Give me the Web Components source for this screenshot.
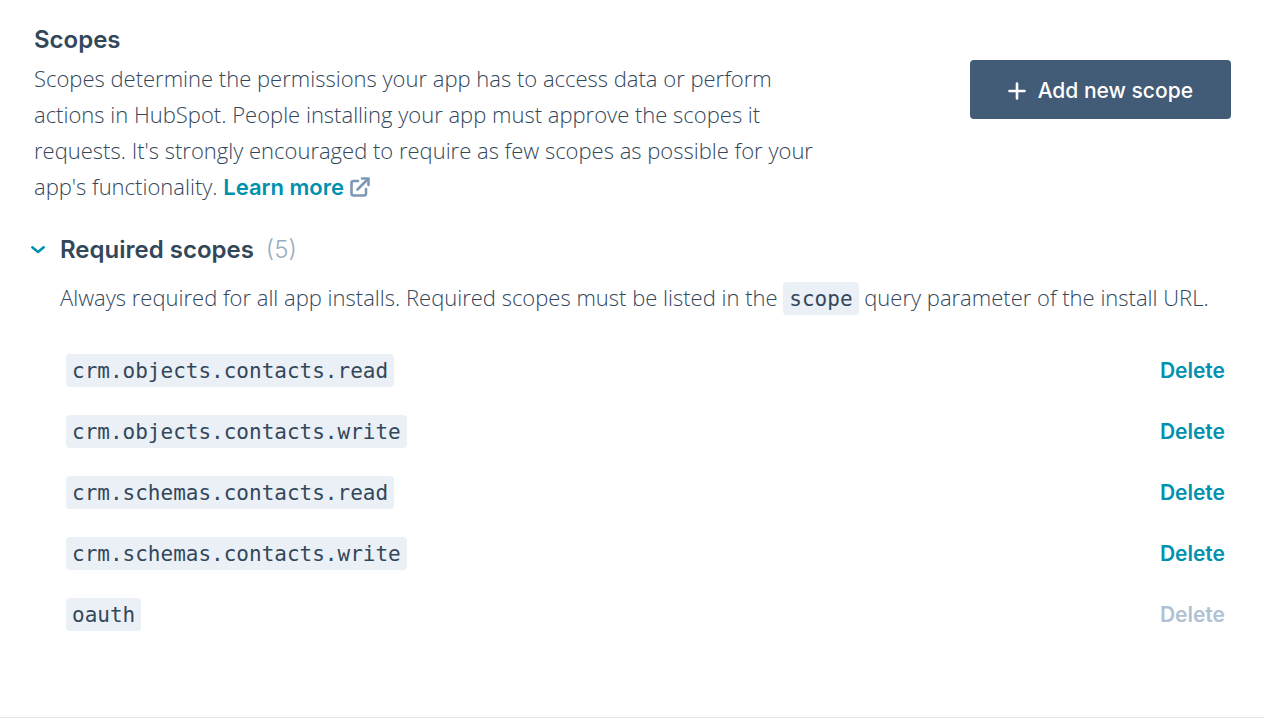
<!DOCTYPE html>
<html lang="en">
<head>
<meta charset="utf-8">
<meta name="viewport" content="width=device-width, initial-scale=1">
<title>Scopes</title>
<style>
  html {
    --ink: #33475b;
    --link: #0091ae;
    --muted: #99acc2;
    --disabled: #b0c1d4;
    --chip: #eaf0f6;
    --rule: #dfe3eb;
    --action: #425b76;
    --strong-font: Inter, "Liberation Sans", sans-serif;
    --body-font: "Open Sans", "Liberation Sans", sans-serif;
  }
  body {
    margin: 0;
    background: #fff;
    color: var(--ink);
    font: 300 22px/36px var(--body-font);
  }
</style>
</head>
<body>
<scopes-panel></scopes-panel>

<template id="scopes-panel">
  <style>
    :host { display: block; padding: 22px 33px 73px 34px; border-bottom: 1px solid var(--rule); }
    header { display: grid; grid-template-columns: 2fr 1fr; align-items: start; }
    h2 { margin: 0 0 2px; font: 600 24px/36px var(--strong-font); }
    p { margin: 0; }
    add-button { justify-self: end; margin-top: 38px; }
  </style>
  <header>
    <div>
      <h2>Scopes</h2>
      <p><span>Scopes determine the permissions your app has to access data or perform actions in HubSpot. People installing your app must approve the scopes it requests. It's strongly encouraged to require as few scopes as possible for your </span><span>app's functionality. </span><external-link href="#learn">Learn more</external-link></p>
    </div>
    <add-button>Add new scope</add-button>
  </header>
  <scope-section heading="Required scopes" count="5">
    <span slot="description">Always required for all app installs. Required scopes must be listed in the <scope-code>scope</scope-code> query parameter of the install URL.</span>
    <scope-row>crm.objects.contacts.read</scope-row>
    <scope-row>crm.objects.contacts.write</scope-row>
    <scope-row>crm.schemas.contacts.read</scope-row>
    <scope-row>crm.schemas.contacts.write</scope-row>
    <scope-row locked>oauth</scope-row>
  </scope-section>
</template>

<template id="external-link">
  <style>
    :host { display: inline; }
    a { color: var(--link); font: 600 22px/24px var(--strong-font); text-decoration: none; white-space: nowrap; }
    a:hover { text-decoration: underline; }
    svg { width: 20px; height: 20px; margin-left: 6px; vertical-align: -2px; }
  </style>
  <a><slot></slot><svg viewBox="0 0 20 20" fill="none" stroke="#7c98b6" stroke-width="2.600" stroke-linecap="round" stroke-linejoin="round" aria-hidden="true"><path d="M8 4H3.5Q1.5 4 1.500 6V16.500Q1.500 18.500 3.500 18.500H14Q16 18.500 16 16.500V12"/><path d="M7.500 12.500 17 3" /><path d="M12 1.500H18.500V8"/></svg></a>
</template>

<template id="add-button">
  <style>
    :host { display: block; }
    button { display: flex; align-items: center; gap: 12px; padding: 13px 38px 10px; border: 0; border-radius: 4px; background: var(--action); color: #fff; font: 500 21px/36px var(--strong-font); white-space: nowrap; cursor: pointer; }
    svg { width: 18px; height: 18px; }
  </style>
  <button type="button"><svg viewBox="0 0 18 18" fill="none" stroke="#fff" stroke-width="2.600" stroke-linecap="round" aria-hidden="true"><path d="M9 1.500V16.500M1.500 9H16.500"/></svg><slot></slot></button>
</template>

<template id="scope-section">
  <style>
    :host { display: block; margin-top: 28px; }
    .layout { display: grid; grid-template-columns: 26px 1fr; }
    button { display: flex; align-items: center; height: 36px; margin: 0 0 0 -4px; padding: 0; border: 0; background: none; cursor: pointer; }
    svg { width: 16px; height: 16px; }
    h3 { display: flex; gap: 12px; margin: 0; font: 600 24px/36px var(--strong-font); }
    .count { color: var(--muted); font: 300 24px/36px var(--strong-font); }
    p { margin: 11px 0 24px; }
    [hidden] { display: none; }
  </style>
  <div class="layout">
    <button type="button" aria-expanded="true" aria-labelledby="title"><svg viewBox="0 0 16 16" fill="none" stroke="#0091ae" stroke-width="2.600" stroke-linecap="round" stroke-linejoin="round" aria-hidden="true"><path d="M2.300 5.300 8 10 13.700 5.300"/></svg></button>
    <section>
      <h3><span id="title"></span><span class="count"></span></h3>
      <div id="content">
        <p><slot name="description"></slot></p>
        <div role="list"><slot></slot></div>
      </div>
    </section>
  </div>
</template>

<template id="scope-code">
  <style>
    :host { display: inline; }
    code { padding: 5px 6px 4px; border-radius: 4px; background: var(--chip); font: 400 21px/24px "DejaVu Sans Mono", monospace; }
  </style>
  <code><slot></slot></code>
</template>

<template id="scope-row">
  <style>
    :host { display: flex; align-items: center; justify-content: space-between; padding: 14px 6px; line-height: 33px; }
    button { padding: 3px 0 0; border: 0; background: none; color: var(--link); font: 600 21px/30px var(--strong-font); cursor: pointer; }
    button:disabled { color: var(--disabled); cursor: default; }
  </style>
  <scope-code><slot></slot></scope-code>
  <button type="button">Delete</button>
</template>

<script>
  class TemplateElement extends HTMLElement {
    constructor() {
      super();
      const template = document.getElementById(this.localName);
      this.attachShadow({ mode: 'open' }).append(template.content.cloneNode(true));
    }
    find(selector) { return this.shadowRoot.querySelector(selector); }
  }

  customElements.define('scope-code', class extends TemplateElement {});
  customElements.define('add-button', class extends TemplateElement {});

  customElements.define('external-link', class extends TemplateElement {
    connectedCallback() { this.find('a').href = this.getAttribute('href'); }
  });

  customElements.define('scope-row', class extends TemplateElement {
    connectedCallback() {
      this.setAttribute('role', 'listitem');
      const button = this.find('button');
      button.disabled = this.hasAttribute('locked');
      button.onclick = () => this.remove();
    }
  });

  customElements.define('scope-section', class extends TemplateElement {
    connectedCallback() {
      this.find('#title').textContent = this.getAttribute('heading');
      this.find('.count').textContent = `(${this.getAttribute('count')})`;
      const toggle = this.find('button');
      toggle.onclick = () => {
        const open = toggle.getAttribute('aria-expanded') === 'true';
        toggle.setAttribute('aria-expanded', String(!open));
        this.find('#content').hidden = open;
      };
    }
  });

  customElements.define('scopes-panel', class extends TemplateElement {});
</script>
</body>
</html>
